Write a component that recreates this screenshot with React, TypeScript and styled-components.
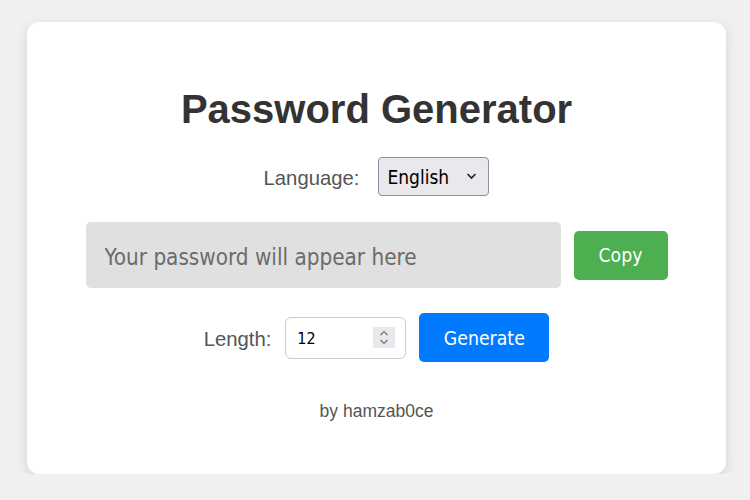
import React from "react";
import styled, { createGlobalStyle } from "styled-components";

const Global = createGlobalStyle`
  html, body { margin: 0; padding: 0; }
  body {
    background: #f0f0f0;
    font-family: "Liberation Sans", Arial, sans-serif;
  }
`;

const Page = styled.div`
  display: flex;
  justify-content: center;
  padding: 22px 0 0 3px;
`;

const Card = styled.div`
  width: 699px;
  height: 452px;
  box-sizing: border-box;
  background: #fff;
  border-radius: 12px;
  box-shadow: 0 4px 12px rgba(0, 0, 0, 0.12);
  display: flex;
  flex-direction: column;
  align-items: center;
  padding-top: 64px;
`;

const Title = styled.h1`
  margin: 0;
  font-size: 40px;
  line-height: 46px;
  font-weight: 700;
  color: #333;
`;

const Row = styled.div<{ $mt: number; $gap: number }>`
  display: flex;
  align-items: center;
  gap: ${(p) => p.$gap}px;
  margin-top: ${(p) => p.$mt}px;
`;

const Label = styled.label`
  font-size: 20.3px;
  color: #555;
  padding-top: 3px;
`;

const UiFont = `"DejaVu Sans Condensed", "DejaVu Sans", Tahoma, sans-serif`;

const SelectWrap = styled.div`
  position: relative;
  width: 111px;
  height: 39px;
`;

const Select = styled.select`
  appearance: none;
  width: 100%;
  height: 100%;
  box-sizing: border-box;
  background: #e9e9ed;
  border: 1px solid #8f8f9d;
  border-radius: 4px;
  padding: 1px 0 0 8px;
  font-family: ${UiFont};
  font-size: 19px;
  color: #000;
  outline: none;
`;

const Chevron = styled.svg`
  position: absolute;
  right: 12px;
  top: 15px;
  pointer-events: none;
`;

const Output = styled.input`
  width: 475px;
  height: 66px;
  box-sizing: border-box;
  border: none;
  border-radius: 5px;
  background: #e0e0e0;
  padding: 3px 19px 0;
  font-family: ${UiFont};
  font-size: 22.3px;
  color: #333;
  outline: none;
  &::placeholder { color: #6b6b6b; }
`;

const Button = styled.button<{ $bg: string; $w: number }>`
  width: ${(p) => p.$w}px;
  height: 49px;
  border: none;
  border-radius: 5px;
  background: ${(p) => p.$bg};
  color: #fff;
  font-family: ${UiFont};
  font-size: 19.3px;
  padding-top: 2px;
  cursor: pointer;
`;

const NumWrap = styled.div`
  position: relative;
  width: 121px;
  height: 42px;
`;

const NumInput = styled.input`
  appearance: textfield;
  -moz-appearance: textfield;
  width: 100%;
  height: 100%;
  box-sizing: border-box;
  border: 1px solid #ccc;
  border-radius: 6px;
  padding: 2px 0 0 11px;
  font-family: ${UiFont};
  font-size: 16px;
  color: #000;
  outline: none;
  &::-webkit-inner-spin-button,
  &::-webkit-outer-spin-button { -webkit-appearance: none; margin: 0; }
`;

const Spinner = styled.div`
  position: absolute;
  right: 11px;
  top: 10px;
  width: 22px;
  height: 21px;
  background: #e9e9ed;
  display: flex;
  align-items: center;
  justify-content: center;
  pointer-events: none;
`;

const Footer = styled.p`
  margin: 39px 0 0;
  font-size: 17.5px;
  color: #555;
`;

export default function App() {
  return (
    <>
      <Global />
      <Page>
        <Card>
          <Title>Password Generator</Title>
          <Row $mt={25} $gap={19}>
            <Label htmlFor="lang">Language:</Label>
            <SelectWrap>
              <Select id="lang" defaultValue="en">
                <option value="en">English</option>
              </Select>
              <Chevron width="11" height="8" viewBox="0 0 11 8">
                <path d="M1.5 2 L5.5 6 L9.5 2" fill="none" stroke="#222" strokeWidth="1.6" />
              </Chevron>
            </SelectWrap>
          </Row>
          <Row $mt={26} $gap={13}>
            <Output readOnly placeholder="Your password will appear here" />
            <Button $bg="#4caf50" $w={94}>Copy</Button>
          </Row>
          <Row $mt={25} $gap={13}>
            <Row $mt={0} $gap={14}>
              <Label htmlFor="len">Length:</Label>
              <NumWrap>
                <NumInput id="len" type="number" defaultValue={12} min={4} max={64} />
                <Spinner>
                  <svg width="10" height="15" viewBox="0 0 10 15">
                    <path d="M1.5 5 L5 1.5 L8.5 5 M1.5 10 L5 13.5 L8.5 10" fill="none" stroke="#777" strokeWidth="1.2" />
                  </svg>
                </Spinner>
              </NumWrap>
            </Row>
            <Button $bg="#007bff" $w={130}>Generate</Button>
          </Row>
          <Footer>by hamzab0ce</Footer>
        </Card>
      </Page>
    </>
  );
}
